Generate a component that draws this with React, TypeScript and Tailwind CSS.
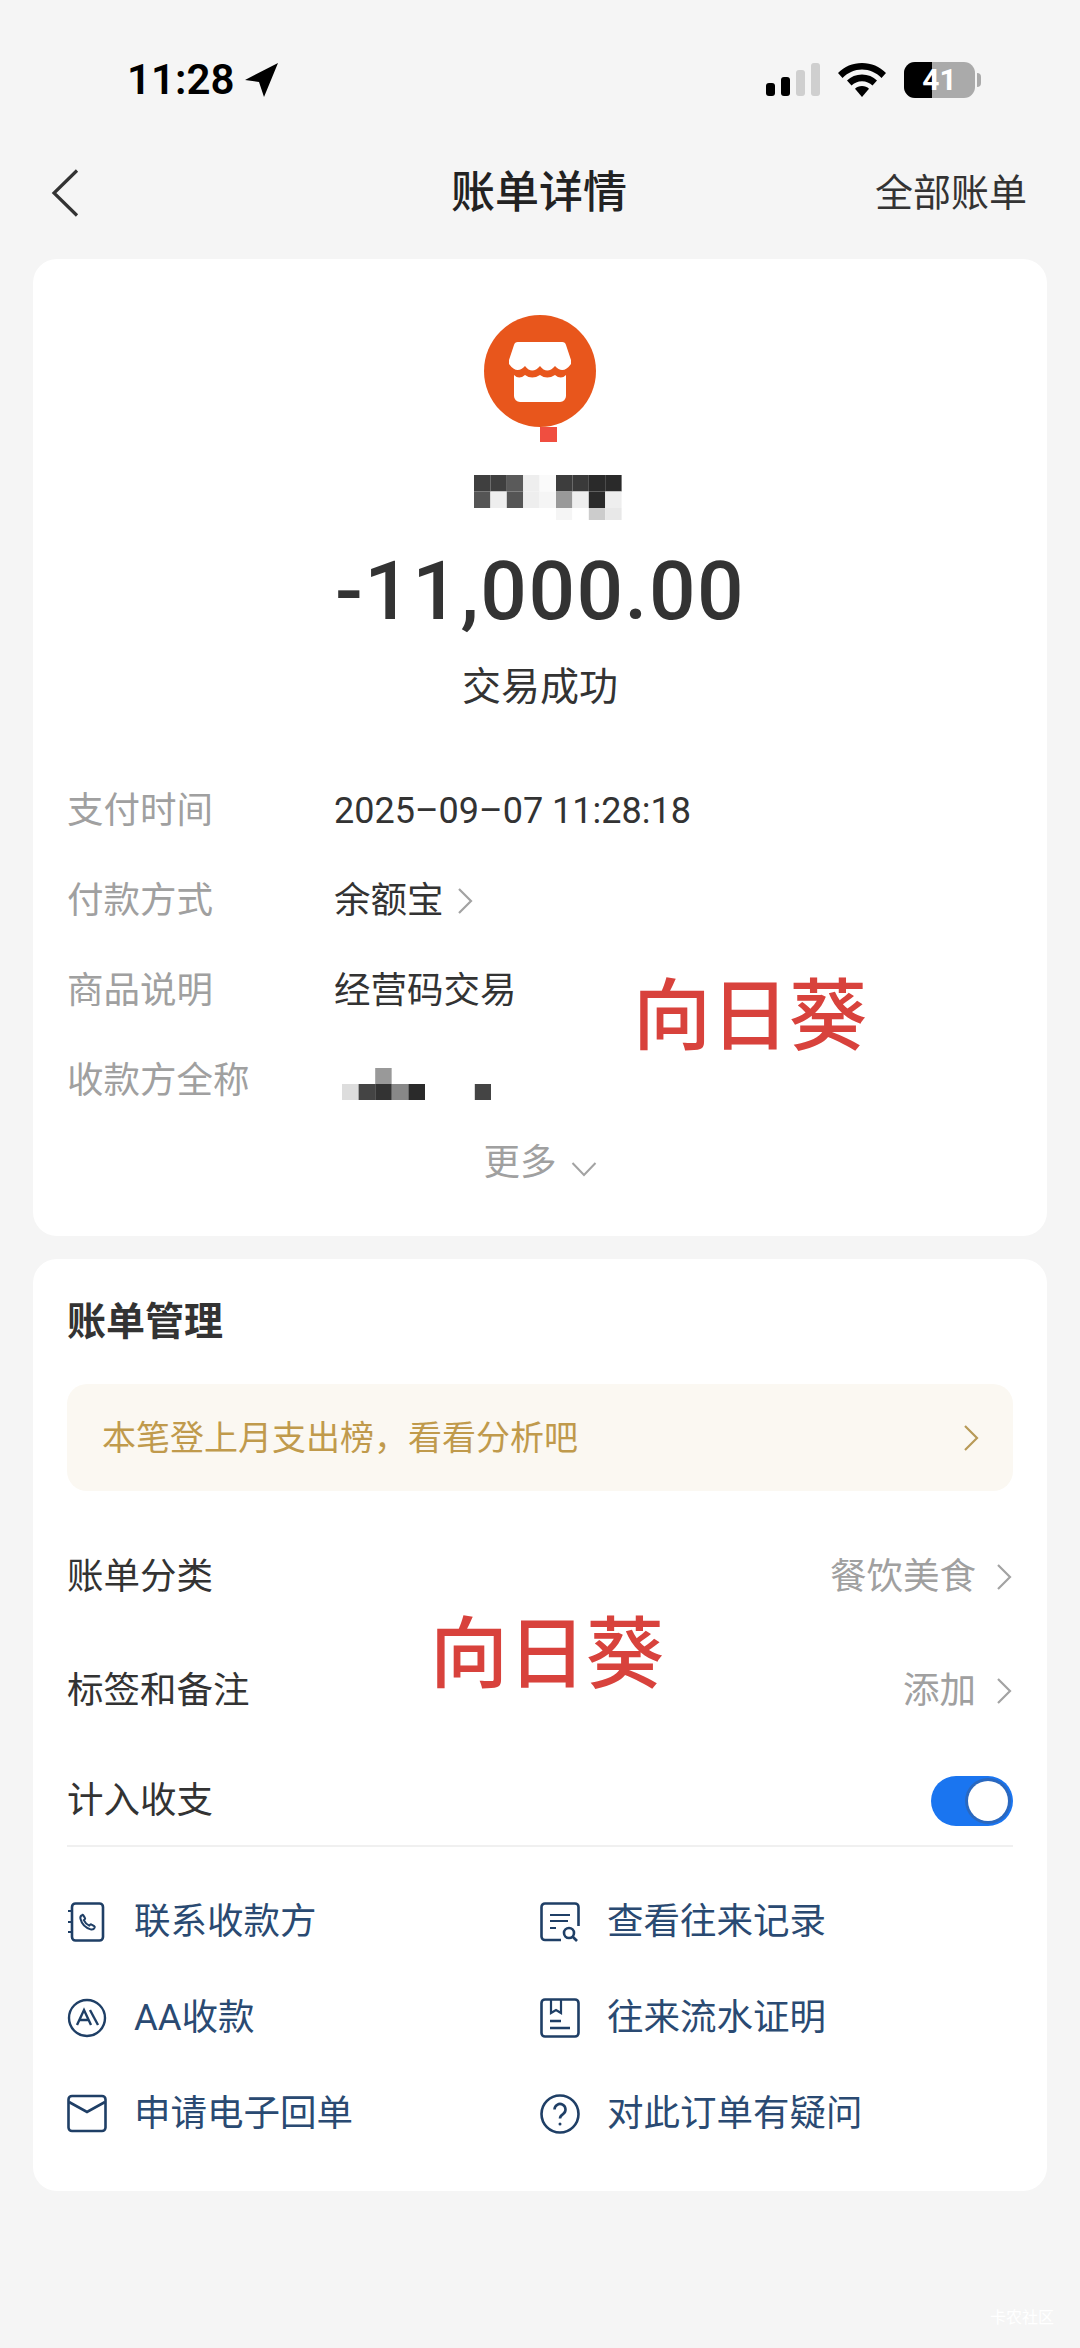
const CJK = "font-['Roboto','Noto_Sans_CJK_SC',sans-serif]";

// mosaic cells of the blurred names, 16px grid
const NAME_MOSAIC = [
  ["#3f3f3f", "#3f3f3f", "#5a5a5a", "#eeeeee", "#fafafa", "#3d3d3d", "#3a3a3a", "#2a2a2a", "#2a2a2a"],
  ["#555555", "#eeeeee", "#555555", "#eeeeee", "#f5f5f5", "#999999", "#eeeeee", "#2a2a2a", "#eeeeee"],
  ["#ffffff", "#ffffff", "#ffffff", "#ffffff", "#ffffff", "#f5f5f5", "#ffffff", "#cccccc", "#e8e8e8"],
];
const PAYEE_MOSAIC = [
  ["#ffffff", "#ffffff", "#999999", "#ffffff", "#ffffff", "#ffffff", "#ffffff", "#ffffff", "#ffffff"],
  ["#dddddd", "#444444", "#333333", "#888888", "#2a2a2a", "#ffffff", "#ffffff", "#ffffff", "#444444"],
];

function Mosaic({ cells, w, h }: { cells: string[][]; w: number; h: number }) {
  return (
    <svg width={cells[0].length * w} height={cells.length * h} className="block">
      {cells.map((row, y) =>
        row.map((c, x) => <rect key={x + "-" + y} x={x * w} y={y * h} width={w} height={h} fill={c} />)
      )}
    </svg>
  );
}

function Chevron({ color = "#a3a3a3", className = "" }: { color?: string; className?: string }) {
  return (
    <svg width="17" height="28" viewBox="0 0 17 28" fill="none" className={className}>
      <path d="M2 2l12 12L2 26" stroke={color} strokeWidth="2.2" />
    </svg>
  );
}

function StoreLogo() {
  return (
    <svg width="112" height="127" viewBox="0 0 112 127" className="block">
      <circle cx="56" cy="56" r="56" fill="#E8561C" />
      <rect x="56" y="112" width="17" height="15" fill="#F04E40" />
      <path
        d="M34 27H78a4 4 0 0 1 4 3l5 15v4Q79 60 71 51Q63 60 56 51Q48 60 41 51Q33 60 25 49v-4l5-15a4 4 0 0 1 4-3Z"
        fill="#fff"
      />
      <path
        d="M30 60Q35 65 41 60Q48 65 56 60Q63 65 71 60Q77 65 82 60V81a6 6 0 0 1-6 6H36a6 6 0 0 1-6-6Z"
        fill="#fff"
      />
    </svg>
  );
}

const navy = "#1f3f66";

function IconContact() {
  return (
    <svg width="40" height="40" viewBox="0 0 40 40" fill="none" stroke={navy} strokeWidth="2.6">
      <rect x="5" y="1.500" width="31" height="37" rx="3.500" />
      <path d="M1 9h5M1 20h5M1 30h5" strokeWidth="2" />
      <g transform="translate(11.500 11) scale(0.78)">
        <path d="M5 2.500c-2 .8-3 3-2.500 5 1.600 6.500 6.500 11.500 13 13.500 2 .6 4.300-.4 5.200-2.300.3-.7 0-1.500-.6-1.900l-3.300-2c-.6-.4-1.400-.3-1.900.2l-1.100 1.200c-3.200-1.400-5.600-3.900-7-7l1.200-1.100c.5-.5.600-1.300.2-1.900l-2-3.200c-.4-.6-1.200-.8-2-.5Z" />
      </g>
    </svg>
  );
}

function IconAA() {
  return (
    <svg width="40" height="40" viewBox="0 0 40 40" fill="none" stroke={navy} strokeWidth="2.400">
      <circle cx="20" cy="20" r="18" />
      <path d="M10 27l7-15 7 15M12.500 22h9" />
      <path d="M23 12l8 15" />
    </svg>
  );
}

function IconMail() {
  return (
    <svg width="40" height="40" viewBox="0 0 40 40" fill="none" stroke={navy} strokeWidth="2.600">
      <rect x="1.500" y="2" width="37" height="35" rx="3.500" />
      <path d="M2 8l18 10 18-10" />
    </svg>
  );
}

function IconRecord() {
  return (
    <svg width="40" height="40" viewBox="0 0 40 40" fill="none" stroke={navy} strokeWidth="2.600">
      <path d="M21 38H5a3.500 3.500 0 0 1-3.500-3.500V5A3.500 3.500 0 0 1 5 1.500h30A3.500 3.500 0 0 1 38.500 5v19" />
      <path d="M10 13h20M10 19h18M10 26h6" strokeWidth="2.200" />
      <circle cx="29" cy="31" r="5" />
      <path d="M33 35l4 4" />
    </svg>
  );
}

function IconProof() {
  return (
    <svg width="40" height="40" viewBox="0 0 40 40" fill="none" stroke={navy} strokeWidth="2.600">
      <rect x="1.500" y="1.500" width="37" height="37" rx="3.500" />
      <path d="M11 2v13l5-3 5 3V2" strokeWidth="2.200" />
      <path d="M10 23h11M10 30h20" strokeWidth="2.400" />
    </svg>
  );
}

function IconHelp() {
  return (
    <svg width="40" height="40" viewBox="0 0 40 40" fill="none" stroke={navy} strokeWidth="2.600">
      <circle cx="20" cy="20" r="18.500" />
      <path d="M14.500 15.500a5.500 5.500 0 1 1 8.500 4.600c-1.900 1.300-3 2.300-3 4.400" />
      <circle cx="20" cy="30" r="1.500" fill={navy} stroke="none" />
    </svg>
  );
}

const DETAILS = [
  { label: "支付时间", value: "2025–09–07 11:28:18" },
  { label: "付款方式", value: "余额宝", arrow: true },
  { label: "商品说明", value: "经营码交易" },
  { label: "收款方全称", mosaic: true },
];

const ACTIONS = [
  { icon: <IconContact />, text: "联系收款方" },
  { icon: <IconRecord />, text: "查看往来记录" },
  { icon: <IconAA />, text: "AA收款" },
  { icon: <IconProof />, text: "往来流水证明" },
  { icon: <IconMail />, text: "申请电子回单" },
  { icon: <IconHelp />, text: "对此订单有疑问" },
];

export default function App() {
  return (
    <div className={`relative w-[1080px] h-[2348px] overflow-hidden bg-[#f5f5f5] ${CJK}`}>
      {/* Status bar */}
      <div className="h-[160px] flex items-center justify-between pl-[127px] pr-[99px]">
        <div className="flex items-center gap-[11px]">
          <span className="text-[42px] leading-none font-semibold text-black">11:28</span>
          <svg width="34" height="34" viewBox="0 0 34 34">
            <path d="M33 0L0 17l14 2 5 15Z" fill="#000" />
          </svg>
        </div>
        <div className="flex items-center">
          <svg width="54" height="34" viewBox="0 0 54 34" className="mr-[18px]">
            <rect x="0" y="20" width="9" height="13" rx="3" fill="#000" />
            <rect x="15" y="14" width="9" height="19" rx="3" fill="#000" />
            <rect x="30" y="7" width="9" height="26" rx="3" fill="#cfcfcf" />
            <rect x="45" y="0" width="9" height="33" rx="3" fill="#cfcfcf" />
          </svg>
          <svg width="48" height="34" viewBox="0 0 48 34" className="mr-[18px]">
            <path d="M24 0C14.500 0 6.500 3.500 0 10l4.500 5C10 9.500 16.500 6.500 24 6.500S38 9.500 43.500 15l4.500-5C41.500 3.500 33.500 0 24 0Z" fill="#000" />
            <path d="M24 11.500c-6 0-11 2.200-15 6l4.500 5c2.700-2.600 6.400-4.300 10.500-4.300s7.800 1.700 10.500 4.300l4.500-5c-4-3.800-9-6-15-6Z" fill="#000" />
            <path d="M24 23c-2.800 0-5.300 1-7 2.800L24 34l7-8.200C29.300 24 26.800 23 24 23Z" fill="#000" />
          </svg>
          <div className="relative w-[71px] h-[36px] rounded-[11px] overflow-hidden bg-[#aaaaaa]">
            <div className="absolute left-0 top-0 bottom-0 w-[28px] bg-black" />
            <span className="absolute inset-0 flex items-center justify-center text-[30px] leading-none font-bold text-white">41</span>
          </div>
          <div className="ml-[2px] w-[4px] h-[14px] rounded-r-full bg-[#aaaaaa]" />
        </div>
      </div>

      {/* Nav */}
      <div className="h-[66px] flex items-center pl-[51px] pr-[53px]">
        <div className="flex-1">
          <svg width="28" height="48" viewBox="0 0 28 48" fill="none" className="block">
            <path d="M26 1.500L3 24l23 22.500" stroke="#333" strokeWidth="3.200" />
          </svg>
        </div>
        <span className="text-[44px] leading-none font-medium text-[#222]">账单详情</span>
        <div className="flex-1 text-right text-[38px] leading-none text-[#333]">全部账单</div>
      </div>

      {/* Bill summary */}
      <div className="mt-[33px] mx-[33px] h-[977px] rounded-[24px] bg-white px-[34px] flex flex-col">
        <div className="mt-[56px] mx-auto">
          <StoreLogo />
        </div>
        <div className="mt-[33px] ml-[407px] w-[148px] h-[45px] overflow-hidden">
          <Mosaic cells={NAME_MOSAIC} w={16.4} h={16.5} />
        </div>
        <div className="mt-[26px] h-[90px] flex items-center justify-center text-[82px] leading-none font-medium text-[#333] tracking-[1.500px]">
          -11,000.00
        </div>
        <div className="mt-[26px] h-[50px] flex items-center justify-center text-[39px] leading-none text-[#333]">
          交易成功
        </div>

        <div className="mt-[54px]">
          {DETAILS.map((d, i) => (
            <div key={d.label} className="h-[90px] flex items-center text-[36.500px] leading-none">
              <span className="w-[267px] shrink-0 text-[#a0a0a0]">{d.label}</span>
              {d.mosaic ? (
                <div className="ml-[8px] mt-[6px]">
                  <Mosaic cells={PAYEE_MOSAIC} w={16.6} h={16} />
                </div>
              ) : (
                <span className={i === 0 ? "text-[36px] text-[#333]" : "text-[#333]"}>{d.value}</span>
              )}
              {d.arrow && <Chevron className="ml-[13px]" />}
            </div>
          ))}
        </div>

        <div className="mt-[12px] h-[50px] flex items-center justify-center text-[36.500px] leading-none text-[#a0a0a0]">
          <span>更多</span>
          <svg width="26" height="16" viewBox="0 0 26 16" fill="none" className="ml-[14px] mt-[12px]">
            <path d="M1.500 2L13 14 24.500 2" stroke="#a3a3a3" strokeWidth="2" />
          </svg>
        </div>
      </div>

      {/* Bill management */}
      <div className="mt-[23px] mx-[33px] h-[932px] rounded-[24px] bg-white px-[34px] pt-[38px] pb-[31px]">
        <div className="h-[50px] flex items-center text-[39px] leading-none font-bold text-[#333]">账单管理</div>

        <div className="mt-[37px] h-[107px] rounded-[20px] bg-[#fbf8f2] pl-[35px] pr-[33px] flex items-center justify-between">
          <span className="text-[34px] leading-none text-[#c09a4c]">本笔登上月支出榜，看看分析吧</span>
          <Chevron color="#b89a58" />
        </div>

        <div className="mt-[29px] h-[114px] flex items-center justify-between text-[36.500px] leading-none">
          <span className="text-[#333]">账单分类</span>
          <span className="flex items-center text-[#a0a0a0]">
            餐饮美食
            <Chevron className="ml-[20px]" />
          </span>
        </div>
        <div className="h-[114px] flex items-center justify-between text-[36.500px] leading-none">
          <span className="text-[#333]">标签和备注</span>
          <span className="flex items-center text-[#a0a0a0]">
            添加
            <Chevron className="ml-[20px]" />
          </span>
        </div>
        <div className="mt-[9px] h-[90px] flex items-center justify-between border-b-2 border-[#f0f0f0] text-[36.500px] leading-none">
          <span className="text-[#333]">计入收支</span>
          <div className="w-[82px] h-[50px] rounded-full bg-[#1a75f0] flex items-center justify-end pr-[5px]">
            <div className="w-[40px] h-[40px] rounded-full bg-white ring-[3px] ring-[#2a68bf]" />
          </div>
        </div>

        <div className="mt-[27px] grid grid-cols-[473px_1fr]">
          {ACTIONS.map((a) => (
            <div key={a.text} className="h-[96px] flex items-center text-[36.500px] leading-none text-[#2a4a72]">
              <span className="shrink-0 w-[67px]">{a.icon}</span>
              <span>{a.text}</span>
            </div>
          ))}
        </div>
      </div>

      {/* Watermarks on top of the screenshot */}
      <div className="absolute left-[633px] top-[973px] text-[78px] leading-[90px] font-medium text-[#d8423c]">向日葵</div>
      <div className="absolute left-[430px] top-[1611px] text-[78px] leading-[90px] font-medium text-[#d8423c]">向日葵</div>
      <div className="absolute left-[990px] top-[2308px] text-[16px] leading-[20px] text-white">卡农社区</div>
    </div>
  );
}
